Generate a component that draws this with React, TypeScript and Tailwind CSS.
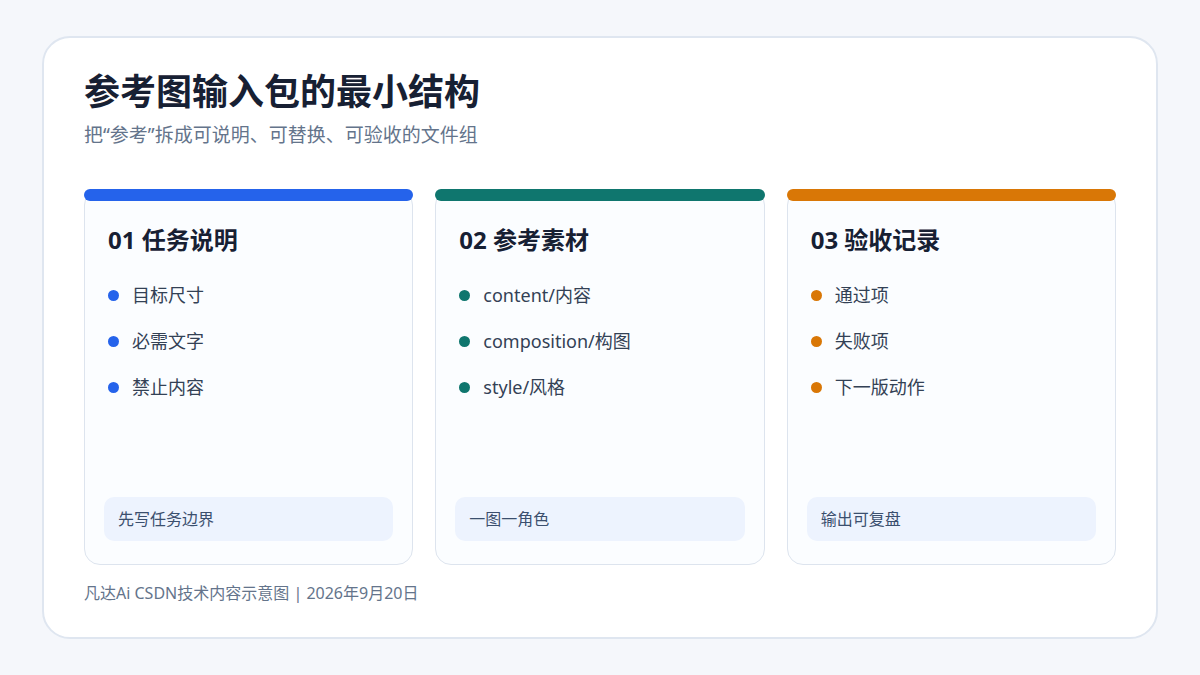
const cards = [
  {
    title: '01 任务说明',
    bar: 'bg-[#2563eb]',
    dot: 'bg-[#2563eb]',
    items: ['目标尺寸', '必需文字', '禁止内容'],
    note: '先写任务边界',
  },
  {
    title: '02 参考素材',
    bar: 'bg-[#0f766e]',
    dot: 'bg-[#0f766e]',
    items: ['content/内容', 'composition/构图', 'style/风格'],
    note: '一图一角色',
  },
  {
    title: '03 验收记录',
    bar: 'bg-[#d97706]',
    dot: 'bg-[#d97706]',
    items: ['通过项', '失败项', '下一版动作'],
    note: '输出可复盘',
  },
]

function StepCard({ card }: { card: (typeof cards)[number] }) {
  return (
    <div className="relative flex flex-col rounded-2xl border border-[#dde4ee] bg-[#fbfdff] px-[23px] pt-[35px] pb-[23px]">
      {/* top colour bar */}
      <div className={`absolute -left-px -right-px -top-px h-3 rounded-full ${card.bar}`} />

      <h2 className="text-[24px] leading-[30px] font-bold text-[#172033]">{card.title}</h2>

      <ul className="mt-[26px] flex flex-col gap-[18px]">
        {card.items.map((item) => (
          <li key={item} className="flex items-center gap-[13px] text-[18px] leading-[28px] text-[#334155]">
            <span className={`h-[11px] w-[11px] shrink-0 rounded-full ${card.dot}`} />
            {item}
          </li>
        ))}
      </ul>

      <div className="-mx-1 mt-auto flex h-11 items-center rounded-[10px] bg-[#edf3fe] px-[14px] text-[16px] text-[#3b4f6e]">
        {card.note}
      </div>
    </div>
  )
}

export default function App() {
  return (
    <div
      className="h-[675px] w-[1200px] bg-[#f5f7fb] px-[42px] py-9"
      style={{ fontFamily: '"Noto Sans", "Noto Sans CJK SC", sans-serif' }}
    >
      <div className="flex h-full flex-col rounded-[28px] border-2 border-[#dfe6f0] bg-white px-10 pt-8 pb-8">
        {/* HEADER */}
        <h1 className="text-[36px] leading-[43px] font-bold text-[#172033]">参考图输入包的最小结构</h1>
        <p className="mt-2 text-[19px] leading-[28px] text-[#64748b]">
          把“参考”拆成可说明、可替换、可验收的文件组
        </p>

        {/* CARDS */}
        <div className="mt-10 grid flex-1 grid-cols-3 gap-[22px]">
          {cards.map((card) => (
            <StepCard key={card.title} card={card} />
          ))}
        </div>

        {/* FOOTER */}
        <p className="mt-4 text-[16px] leading-6 text-[#64748b]">凡达Ai CSDN技术内容示意图 | 2026年9月20日</p>
      </div>
    </div>
  )
}
